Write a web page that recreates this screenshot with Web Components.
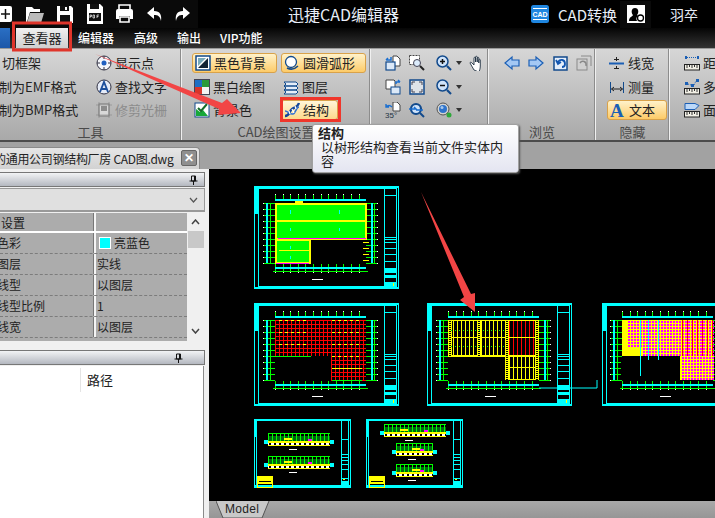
<!DOCTYPE html>
<html lang="zh">
<head>
<meta charset="utf-8">
<title>迅捷CAD编辑器</title>
<style>
html,body{margin:0;height:100%;background:#000;overflow:hidden}
body{font-family:"Noto Sans CJK SC","Liberation Sans",sans-serif;font-size:13px;color:#222}
</style>
</head>
<body>
<cad-app>
  <title-bar slot="title"></title-bar>
  <menu-tabs slot="tabs"></menu-tabs>
  <ribbon-bar slot="ribbon">
    <ribbon-group label="工具" width="182" cols="94px 84px" pad="2">
      <ribbon-btn>切框架</ribbon-btn><ribbon-btn icon="point">显示点</ribbon-btn>
      <ribbon-btn style="margin-left:-3px">制为EMF格式</ribbon-btn><ribbon-btn icon="find">查找文字</ribbon-btn>
      <ribbon-btn style="margin-left:-3px">制为BMP格式</ribbon-btn><ribbon-btn icon="crop" disabled>修剪光栅</ribbon-btn>
    </ribbon-group>
    <ribbon-group label="CAD绘图设置" width="189" cols="89px 86px" pad="12">
      <ribbon-btn icon="blackbg" active>黑色背景</ribbon-btn><ribbon-btn icon="arc" active>圆滑弧形</ribbon-btn>
      <ribbon-btn icon="bw">黑白绘图</ribbon-btn><ribbon-btn icon="layers">图层</ribbon-btn>
      <ribbon-btn icon="bgcolor">背景色</ribbon-btn><ribbon-btn icon="dna" active short>结构</ribbon-btn>
    </ribbon-group>
    <ribbon-group width="118" cols="24px 27px 33px 24px" pad="14">
      <ribbon-btn icon="copyto"></ribbon-btn><ribbon-btn icon="zoomwin"></ribbon-btn><ribbon-btn icon="zoomin" drop></ribbon-btn><ribbon-btn icon="hand"></ribbon-btn>
      <ribbon-btn icon="copyfrom"></ribbon-btn><ribbon-btn icon="fit"></ribbon-btn><ribbon-btn icon="zoomout" drop></ribbon-btn><span></span>
      <ribbon-btn icon="rotate"></ribbon-btn><ribbon-btn icon="refresh"></ribbon-btn><ribbon-btn icon="globe" drop></ribbon-btn><span></span>
    </ribbon-group>
    <ribbon-group label="浏览" width="107" cols="24px 25px 23px 24px" pad="15">
      <ribbon-btn icon="left"></ribbon-btn><ribbon-btn icon="right"></ribbon-btn><ribbon-btn icon="back"></ribbon-btn><ribbon-btn icon="backoff"></ribbon-btn>
    </ribbon-group>
    <ribbon-group label="隐藏" width="74" cols="60px" pad="13">
      <ribbon-btn icon="linew">线宽</ribbon-btn>
      <ribbon-btn icon="measure">测量</ribbon-btn>
      <ribbon-btn icon="textA" active>文本</ribbon-btn>
    </ribbon-group>
    <ribbon-group width="60" cols="60px" pad="14" last>
      <ribbon-btn icon="dist">距离</ribbon-btn>
      <ribbon-btn icon="multi">多段线</ribbon-btn>
      <ribbon-btn icon="area">面积</ribbon-btn>
    </ribbon-group>
  </ribbon-bar>
  <doc-strip slot="docs">的通用公司钢结构厂房 CAD图.dwg</doc-strip>
  <side-panel slot="side"></side-panel>
  <cad-canvas slot="canvas">
    <cad-sheet plan="green" style="left:45px;top:17px"></cad-sheet>
    <cad-sheet plan="red" style="left:45px;top:134px"></cad-sheet>
    <cad-sheet plan="yellow" style="left:218px;top:134px"></cad-sheet>
    <cad-sheet plan="magenta" style="left:393px;top:134px"></cad-sheet>
    <cad-sheet plan="elev2" small style="left:45px;top:250px"></cad-sheet>
    <cad-sheet plan="elev3" small style="left:157px;top:250px"></cad-sheet>
  </cad-canvas>
  <ribbon-tip slot="overlay" heading="结构">以树形结构查看当前文件实体内容</ribbon-tip>
  <red-marks slot="overlay"></red-marks>
</cad-app>

<script>
const ruler = `<rect x=".5" y="9.500" width="15" height="5.500" fill="#f2f0e6" stroke="#222"/><path d="M3 10v3M5.500 10v2M8 10v3M10.500 10v2M13 10v3" stroke="#333"/>`;
const ICONS = {
  point:`<circle cx="8" cy="8" r="7" fill="#f4f6fb" stroke="#334"/><circle cx="8" cy="8" r="2.500" fill="#1f5fc0"/><path d="M8 1v3M8 12v3M1 8h3M12 8h3" stroke="#334"/>`,
  find:`<circle cx="8" cy="8" r="7" fill="#e6ecf8" stroke="#334"/><path d="M4 13 8 3l4 10M5.600 10h4.800" fill="none" stroke="#1c4f9c" stroke-width="1.900"/>`,
  crop:`<rect x="3" y="2" width="10" height="12" fill="#d8d8d8" stroke="#777"/><rect x="5" y="4" width="6" height="5" fill="#8c8c8c"/><path d="M0 3h16M0 13h16M3 0v16M13 0v16" stroke="#888" stroke-width=".6"/>`,
  blackbg:`<rect x="1" y="1" width="14" height="14" fill="#fff" stroke="#124a8c" stroke-width="1.500"/><path d="M3 13 13 3v10z" fill="#123"/><path d="M3 3h8L3 11z" fill="#7ab"/>`,
  arc:`<circle cx="7" cy="7" r="5.500" fill="#fff" stroke="#124a8c" stroke-width="1.300"/><path d="M3 13c4 2 8 1 11-2" fill="none" stroke="#124a8c" stroke-width="1.500"/>`,
  bw:`<rect x="1" y="1" width="7" height="7" fill="#1d6fc4"/><rect x="8" y="1" width="7" height="7" fill="#2a9a3a"/><rect x="1" y="8" width="7" height="7" fill="#d8342a"/><rect x="8" y="8" width="7" height="7" fill="#f4f4f4"/><rect x=".5" y=".5" width="15" height="15" fill="none" stroke="#445"/>`,
  layers:`<path d="M1 3h12l2 2-2 2H1l2-2zM1 7h12l2 2-2 2H1l2-2zM1 11h12l2 2-2 2H1l2-2z" fill="#e6eef8" stroke="#124a8c"/>`,
  bgcolor:`<rect x="1" y="1" width="14" height="14" fill="#fff" stroke="#124a8c"/><path d="M2 14V7l4 3 3-2 5 6z" fill="#18a83a"/><path d="m4 6 3 3 6-7" fill="none" stroke="#176c2a" stroke-width="2"/>`,
  dna:`<path d="M1 14C6 14 5 9 8 7s6-2 7-6" fill="none" stroke="#14479c" stroke-width="2.400"/><path d="M1 9c3 0 5 4 8 3s3-7 6-7" fill="none" stroke="#2f6fd0" stroke-width="1.500"/><path d="m5 9 1 3M8 7l2 4M11 4l1 3" stroke="#fff" stroke-width="1.200"/>`,
  copyto:`<path d="M8 1h4l3 3v7H8z" fill="#fff" stroke="#444"/><rect x="1" y="7" width="9" height="8" fill="#dce9f8" stroke="#124a8c" stroke-width="1.200"/><path d="M1 5h5V2M1 5l2-2" fill="none" stroke="#1b6fd0" stroke-width="1.500"/>`,
  zoomwin:`<rect x=".5" y=".5" width="10" height="9" fill="#fff" stroke="#444" stroke-dasharray="2 1"/><circle cx="8" cy="8" r="3.500" fill="#dcecfc" stroke="#445"/><path d="m11 11 4 4" stroke="#222" stroke-width="2"/>`,
  zoomin:`<circle cx="6.500" cy="6.500" r="5.500" fill="#cfe3fa" stroke="#124a8c" stroke-width="1.500"/><path d="M4 6.500h5M6.500 4v5" stroke="#111" stroke-width="1.500"/><path d="m11 11 4 4" stroke="#124a8c" stroke-width="2.200"/>`,
  zoomout:`<circle cx="6.500" cy="6.500" r="5.500" fill="#cfe3fa" stroke="#124a8c" stroke-width="1.500"/><path d="M4 6.500h5" stroke="#111" stroke-width="1.500"/><path d="m11 11 4 4" stroke="#124a8c" stroke-width="2.200"/>`,
  hand:`<path d="M5 15 1 8c0-1 1-1 2 0l2 2V3c0-1 1.500-1 1.500 0v4-5c0-1 1.700-1 1.700 0v5-4c0-1 1.600-1 1.600 0v5-3c0-1 1.500-1 1.500 0v6c0 3-1 5-1.500 6z" fill="#fff" stroke="#234" stroke-width=".9"/>`,
  copyfrom:`<path d="M1 1h8l1 1v8H1z" fill="#fff" stroke="#444"/><rect x="6" y="8" width="9" height="7" fill="#dce9f8" stroke="#124a8c"/><path d="M11 5V3h4M15 3l-2-2" fill="none" stroke="#1b6fd0" stroke-width="1.500"/>`,
  fit:`<rect x="1" y="1" width="14" height="14" fill="#dfe3e8" stroke="#124a8c" stroke-width="1.500"/><path d="M3 6V3h3M10 3h3v3M13 10v3h-3M6 13H3v-3" fill="none" stroke="#445"/>`,
  rotate:`<path d="M8 0h4l3 3v6H8z" fill="#fff" stroke="#444"/><path d="M1 5c2-2 4-2 6 0M1 2v3h3" fill="none" stroke="#1b6fd0" stroke-width="1.400"/><text x="0" y="16" font-family="Liberation Sans,sans-serif" font-size="8" fill="#234">35°</text>`,
  refresh:`<circle cx="7" cy="7" r="5" fill="#cfe3fa" stroke="#124a8c" stroke-width="2.200"/><path d="M0 7h7l-2-2M7 8h7" stroke="#1b6fd0" stroke-width="1.500" fill="none"/><path d="m11 11 4 4" stroke="#124a8c" stroke-width="2"/>`,
  globe:`<circle cx="7" cy="7" r="6" fill="#d4d4d0" stroke="#555"/><circle cx="7" cy="7" r="4" fill="#2f74cc"/><circle cx="6" cy="5.500" r="1.500" fill="#a8c8ec"/><circle cx="13" cy="13" r="2.500" fill="#2ea83a"/>`,
  left:`<path d="M1 8 8 2v3h7v6H8v3z" fill="#a4c8f4" stroke="#1b5fb5" stroke-width="1.200"/>`,
  right:`<path d="M15 8 8 2v3H1v6h7v3z" fill="#a4c8f4" stroke="#1b5fb5" stroke-width="1.200"/>`,
  back:`<rect x="1" y="2" width="13" height="13" fill="#e4eefb" stroke="#124a8c" stroke-width="1.500"/><path d="M5 7c2-3 7-3 7 2 0 2-1 3-3 3M3 5l2 4 3-2" fill="none" stroke="#1256b0" stroke-width="1.800"/>`,
  backoff:`<rect x="1" y="4" width="10" height="11" fill="#d0d0d0" stroke="#8a8a8a"/><path d="M5 1h10v10" fill="none" stroke="#8a8a8a"/><path d="M4 8c2-3 7-2 6 3" fill="none" stroke="#888" stroke-width="1.500"/>`,
  linew:`<path d="M0 8.500h15" stroke="#1b5fb5" stroke-width="2"/><path d="M5 4.500h5M5 13.500h5M7.500 2v4M7.500 11v3" stroke="#222"/>`,
  measure:`<path d="M1.500 3v11M14.500 3v11" stroke="#124a8c"/><path d="M2.500 10h11M5 8l-2.500 2L5 12M11 8l2.500 2L11 12" fill="none" stroke="#222"/>`,
  textA:`<text x="0" y="15" font-family="Liberation Serif,serif" font-weight="700" font-size="19" fill="#1b5fb5">A</text>`,
  dist:`<path d="M1 2.500h2M13 2.500h2" stroke="#1b5fb5" stroke-width="3"/><path d="M3 2.500h10" stroke="#1b5fb5" stroke-dasharray="1 1"/>${ruler}`,
  multi:`<path d="M1 4.500h3M7 6.500h3M12 1.500h3" stroke="#1b5fb5" stroke-width="3"/><path d="M4 5l3 1M10 6l2-4" stroke="#1b5fb5" stroke-dasharray="1 1"/>${ruler}`,
  area:`<path d="M1 1.500h10l4 2-4 4H1z" fill="#bcd8f8" stroke="#1b5fb5"/>${ruler}`
};

class CadApp extends HTMLElement {
  constructor() {
    super();
    this.attachShadow({ mode: "open" }).innerHTML = `<style>
      :host{display:grid;position:relative;width:715px;height:518px;overflow:hidden;
        grid-template-columns:209px 1fr;grid-template-rows:28px 20px 94px 27px 1fr;background:#000}
      .wide{grid-column:1 / 3;display:block;min-width:0}
    </style>
    <div class="wide"><slot name="title"></slot></div>
    <div class="wide"><slot name="tabs"></slot></div>
    <div class="wide"><slot name="ribbon"></slot></div>
    <div class="wide"><slot name="docs"></slot></div>
    <slot name="side"></slot>
    <slot name="canvas"></slot>
    <slot name="overlay"></slot>`;
  }
}

class TitleBar extends HTMLElement {
  constructor() {
    super();
    this.attachShadow({ mode: "open" }).innerHTML = `<style>
      :host{display:flex;align-items:center;height:28px;background:#000;color:#e8eef8;position:relative}
      svg{display:block;flex:none}
      .tools{display:flex;align-items:center;height:28px;padding-left:0;background:#0a0a0a;width:198px;flex:none}
      .name{font-size:16px;margin-left:90px;width:114px;white-space:nowrap;line-height:28px}
      .conv{font-size:15px;margin-left:129px;display:flex;align-items:center;gap:9px;width:96px;white-space:nowrap}
      .user{display:flex;align-items:center;justify-content:center;width:31px;height:27px;background:#0a0a0a;margin-left:-7px}
      .who{font-size:14px;margin-left:19px}
    </style>
    <div class="tools">
      <svg width="13" height="20" viewBox="0 0 13 20" style="margin-right:12px"><path d="M0 2h10q2 0 2 2v12q0 2-2 2H0z" fill="#fff"/><path d="M1 10h9M5.500 5v10" stroke="#111" stroke-width="1.500"/></svg>
      <svg width="19" height="20" viewBox="0 0 19 20" style="margin-right:12px"><path d="M1 3h6l2 2h6v3H5L2 18H1z" fill="#fff"/><path d="M5 9h14l-3 10H2z" fill="#bbb"/></svg>
      <svg width="18" height="20" viewBox="0 0 18 20" style="margin-right:12px"><path d="M1 2h14l2 2v15H1z" fill="#fff"/><rect x="4" y="2" width="9" height="5" fill="#111"/><rect x="4" y="11" width="10" height="8" fill="#111"/><rect x="9" y="3" width="2" height="3" fill="#fff"/></svg>
      <svg width="18" height="22" viewBox="0 0 18 22" style="margin-right:11px"><path d="M1 1h13l3 3v17H1z" fill="#fff"/><rect x="4" y="1" width="9" height="5" fill="#111"/><rect x="3" y="10" width="12" height="8" fill="#111"/><path d="M4 15v-3h1.500v1.500H4M7 12v3h1.500v-3zM11 15v-3h2M11 13.500h1.500" stroke="#fff" stroke-width=".7" fill="none"/></svg>
      <svg width="19" height="20" viewBox="0 0 19 20" style="margin-right:12px"><path d="M4 1h11v5H4z" fill="none" stroke="#fff" stroke-width="1.600"/><path d="M1 7q0-2 2-2h13q2 0 2 2v8h-3v-3H4v3H1z" fill="#fff"/><path d="M5 13h9v5H5z" fill="none" stroke="#fff" stroke-width="1.600"/></svg>
      <svg width="18" height="20" viewBox="0 0 18 20" style="margin-right:9px"><path d="M8 3 1 9l7 6v-4c4 0 6 1 7 6 1-6-1-10-7-10z" fill="#fff"/></svg>
      <svg width="18" height="20" viewBox="0 0 18 20"><path d="m10 3 7 6-7 6v-4c-4 0-6 1-7 6-1-6 1-10 7-10z" fill="#fff"/></svg>
    </div>
    <div class="name">迅捷CAD编辑器</div>
    <div class="conv">
      <svg width="18" height="18" viewBox="0 0 18 18"><rect width="18" height="18" rx="2.500" fill="#1f86e0"/><path d="M2 3.500h14M2 14.500h14" stroke="#fff"/><text x="9" y="12" text-anchor="middle" font-family="Liberation Sans,sans-serif" font-size="7" font-weight="700" fill="#fff">CAD</text></svg>
      <span>CAD转换</span>
    </div>
    <div class="user">
      <svg width="18" height="18" viewBox="0 0 18 18"><rect width="18" height="18" fill="#fff"/><path d="M2 16c0-4 3-4 4-6-2-2-2-7 2-7s4 5 2 7l1 1c-2 1-2 3-1 5z" fill="#000"/><circle cx="13.500" cy="13" r="3" fill="none" stroke="#000" stroke-width="1.300"/></svg>
    </div>
    <div class="who">羽卒</div>`;
  }
}

class MenuTabs extends HTMLElement {
  constructor() {
    super();
    this.attachShadow({ mode: "open" }).innerHTML = `<style>
      :host{display:flex;align-items:center;height:20px;background:linear-gradient(#050505,#333);color:#fff;font-size:12px;font-weight:500}
      .app{width:10px;height:20px;background:linear-gradient(#2a6fc4,#1c57a8);flex:none}
      .on{margin-left:6px;width:52px;height:20px;line-height:20px;text-align:center;background:linear-gradient(#f1f1f1,#cfcfcf);color:#222;font-size:13px;font-weight:400;flex:none}
      span{position:absolute;line-height:20px;white-space:nowrap}
    </style>
    <div class="app"></div><div class="on">查看器</div>
    <span style="left:78px">编辑器</span><span style="left:134px">高级</span><span style="left:177px">输出</span><span style="left:220px">VIP功能</span>`;
  }
}

class RibbonBar extends HTMLElement {
  constructor() {
    super();
    this.attachShadow({ mode: "open" }).innerHTML = `<style>
      :host{display:flex;height:94px;overflow:hidden;box-sizing:border-box;
        background:linear-gradient(#d6d6d6,#c4c4c4 40%,#a9a9a9);border-top:1px solid #9a9a9a;border-bottom:2px solid #4c4c4c}
    </style><slot></slot>`;
  }
}

class RibbonGroup extends HTMLElement {
  constructor() {
    super();
    const w = this.getAttribute("width");
    const label = this.getAttribute("label") || "";
    const line = this.hasAttribute("last") ? "" : "border-right:1px solid #f0f0f0;box-shadow:inset -1px 0 0 #8c8c8c;";
    this.attachShadow({ mode: "open" }).innerHTML = `<style>
      :host{display:flex;flex-direction:column;flex:none;width:${w}px;box-sizing:border-box;${line}}
      .items{display:grid;grid-template-columns:${this.getAttribute("cols")};grid-template-rows:24px 23px 20px;
        padding:4px 0 0 ${this.getAttribute("pad")}px;height:67px}
      .label{text-align:center;font-size:13px;line-height:20px;margin-top:2px;color:#4a4a4a;white-space:nowrap;height:18px}
    </style>
    <div class="items"><slot></slot></div><div class="label">${label}</div>`;
  }
}

class RibbonBtn extends HTMLElement {
  constructor() {
    super();
    const icon = this.getAttribute("icon");
    const drop = this.hasAttribute("drop") ? `<svg width="6" height="4" viewBox="0 0 6 4" style="margin-left:1px"><path d="M0 0h6L3 4z" fill="#333"/></svg>` : "";
    const svg = icon ? `<svg class="ic" width="16" height="16" viewBox="0 0 16 16">${ICONS[icon]}</svg>` : "";
    this.attachShadow({ mode: "open" }).innerHTML = `<style>
      :host{display:flex;align-items:center;height:20px;padding-bottom:1px;font-size:13px;color:#222;white-space:nowrap;box-sizing:border-box}
      :host([active]){margin-left:-2px;width:85px;padding-left:2px;background:linear-gradient(#fff2ca,#fdcb68);
        border:1px solid #d9a24a;border-radius:3px}
      :host([active][short]){width:57px;background:linear-gradient(#fff6d8,#fdd98c)}
      :host([icon="textA"][active]){width:60px}
      :host([disabled]){color:#8c8c8c}
      .ic{flex:none;margin-right:3px}
    </style>${svg}${drop}<slot></slot>`;
  }
}

class DocStrip extends HTMLElement {
  constructor() {
    super();
    this.attachShadow({ mode: "open" }).innerHTML = `<style>
      :host{display:block;height:27px;background:#a2a2a2;position:relative;overflow:hidden}
      .tab{position:absolute;left:-1px;top:5px;width:201px;height:22px;box-sizing:border-box;background:linear-gradient(#e6e6e6,#d2d2d2);
        border:1px solid #8a8a8a;border-bottom:0;border-radius:0 4px 0 0;display:flex;align-items:center;font-size:12px;letter-spacing:-.3px;color:#222;white-space:nowrap;overflow:hidden}
      .name{margin-left:-6px}
      .x{position:absolute;left:181px;top:2px;width:16px;height:16px;box-sizing:border-box;background:#8f8f8f;border:1px solid #666;border-radius:2px;
        color:#fff;font:700 12px/14px "Liberation Sans",sans-serif;text-align:center}
    </style><div class="tab"><span class="name"><slot></slot></span><div class="x">✕</div></div>`;
  }
}

class PropRow extends HTMLElement {
  constructor() {
    super();
    const swatch = this.hasAttribute("swatch") ? `<i></i>` : "";
    this.attachShadow({ mode: "open" }).innerHTML = `<style>
      :host{display:grid;grid-template-columns:96px 91px;height:21px;font-size:12px;line-height:20px;color:#222;border-bottom:1px dashed #7c7c7c;box-sizing:border-box;white-space:nowrap}
      :host([head]){height:20px;border-bottom:2px solid #fff;font-size:12px}
      .k{text-indent:-3px;overflow:hidden;border-right:2px solid #f4f4f4;box-shadow:inset -1px 0 0 #777}
      :host([head]) .k{text-indent:1px}
      .v{padding-left:1px;display:flex;align-items:center}
      i{width:10px;height:10px;background:#0ff;border:1px solid #fff;margin:0 3px 0 2px}
    </style><div class="k">${this.getAttribute("k")}</div><div class="v">${swatch}<slot></slot></div>`;
  }
}

class SidePanel extends HTMLElement {
  constructor() {
    super();
    const pin = `<svg width="9" height="10" viewBox="0 0 9 10"><path d="M2.500 1h4v5h-4zM0.500 6h8M4.500 6v4M5.500 1v5" fill="none" stroke="#111"/></svg>`;
    this.attachShadow({ mode: "open" }).innerHTML = `<style>
      :host{display:flex;flex-direction:column;width:209px;height:350px;background:#f0f0f0;overflow:hidden;padding-top:3px;box-sizing:border-box}
      .head{height:15px;width:205px;flex:none;box-sizing:border-box;background:linear-gradient(#f2f3f5,#b4b8c0);border:1px solid #777;border-left:0;display:flex;align-items:center;justify-content:flex-end;padding-right:6px;font-size:12px;position:relative}
      .combo{height:24px;width:205px;margin-top:1px;box-sizing:border-box;background:#e0e0e0;border:1px solid #999;border-left:0;border-bottom-width:2px;display:flex;align-items:center;justify-content:flex-end;padding-right:6px;flex:none}
      .grid{display:flex;width:204px;height:128px;margin-top:1px;flex:none;background:#fff}
      .rows{width:187px;background:#acacac;overflow:hidden}
      .bar{width:17px;background:#f0f0f0;display:flex;flex-direction:column;align-items:center;box-sizing:border-box;padding-top:6px}
      .thumb{width:16px;height:17px;background:#c8c8c8;margin-top:6px}
      .bar svg:last-child{margin-top:auto;margin-bottom:7px}
      .second{margin-top:9px;justify-content:flex-end;padding-right:21px}
      .list{flex:1;width:204px;margin-top:1px;background:#fff;border-right:1px solid #8a8a8a;box-sizing:border-box;position:relative;padding:2px 0 0 80px}
      .cols{height:24px;border-left:1px solid #e4e4e4;padding-left:6px;font-size:13px;line-height:24px;color:#222}
    </style>
    <div class="head">${pin}</div>
    <div class="combo"><svg width="9" height="6" viewBox="0 0 9 6"><path d="m1 1 3.500 4L8 1" fill="none" stroke="#555" stroke-width="1.200"/></svg></div>
    <div class="grid">
      <div class="rows"><slot></slot></div>
      <div class="bar">
        <svg width="9" height="6" viewBox="0 0 9 6"><path d="m1 5 3.500-4L8 5" fill="none" stroke="#444" stroke-width="1.500"/></svg>
        <div class="thumb"></div>
        <svg width="9" height="6" viewBox="0 0 9 6"><path d="m1 1 3.500 4L8 1" fill="none" stroke="#444" stroke-width="1.500"/></svg>
      </div>
    </div>
    <div class="head second">${pin}</div>
    <div class="list"><div class="cols">路径</div></div>`;
    this.innerHTML = `<prop-row head k="设置"></prop-row>
      <prop-row k="色彩" swatch>亮蓝色</prop-row>
      <prop-row k="图层">实线</prop-row>
      <prop-row k="线型">以图层</prop-row>
      <prop-row k="线型比例">1</prop-row>
      <prop-row k="线宽">以图层</prop-row>`;
  }
}

class CadCanvas extends HTMLElement {
  constructor() {
    super();
    this.attachShadow({ mode: "open" }).innerHTML = `<style>
      :host{display:flex;flex-direction:column;width:506px;height:349px;overflow:hidden;position:relative}
      .paper{flex:1;background:#000;position:relative}
      .link{position:absolute;left:330px;top:210px}
      .tabs{height:17px;flex:none;background:linear-gradient(#a9a9a9,#969696);position:relative;font:12px/17px "Liberation Sans",sans-serif;letter-spacing:.3px;color:#222}
      .tabs svg{position:absolute;left:7px;top:0}
      .tabs span{position:absolute;left:16px;top:0}
    </style>
    <div class="paper"><slot></slot>
      <svg class="link" width="60" height="10" viewBox="0 0 60 10"><path d="M0 9h58V1" fill="none" stroke="#0ff"/></svg>
    </div>
    <div class="tabs"><svg width="54" height="17" viewBox="0 0 54 17"><path d="M0 0 7 17H46L53 0" fill="#c8c8c8" stroke="#555"/></svg><span>Model</span></div>`;
  }
}

// helpers for the drawing sheets
const C = "#0ff", G = "#0f0", Y = "#ff0", R = "#f00", M = "#f0f", W = "#fff";
const L = (a, b, c, d, col, w = 1) => `<line x1="${a}" y1="${b}" x2="${c}" y2="${d}" stroke="${col}" stroke-width="${w}"/>`;
const B = (x, y, w, h, col) => `<rect x="${x}" y="${y}" width="${w}" height="${h}" fill="${col}"/>`;
const O = (x, y, w, h, col, sw = 1) => `<rect x="${x + .5}" y="${y + .5}" width="${w - 1}" height="${h - 1}" fill="none" stroke="${col}" stroke-width="${sw}"/>`;

function axes(x0, x1, y0, y1) {
  let s = "";
  for (let x = x0; x <= x1; x += 7.6) {
    const px = Math.round(x);
    s += L(px + .5, y0 - 8, px + .5, y0 - 2, G) + L(px + .5, y1 + 1, px + .5, y1 + 8, G);
    s += B(px, y0 - 9, 1, 1, W) + B(px, y1 + 9, 1, 1, W);
  }
  s += L(x0, y0 - 3.5, x1, y0 - 3.5, C, 2) + L(x0, y1 + 4.5, x1, y1 + 4.5, C, 2);
  for (let y = y0; y <= y1; y += 6) {
    const py = Math.round(y) + .5;
    s += L(x0 - 11, py, x0, py, G) + L(x1, py, x1 + 11, py, G);
    s += B(x0 - 12, py - .5, 1, 1, W) + B(x1 + 11, py - .5, 1, 1, W);
  }
  s += L(x0 - 8.5, y0, x0 - 8.5, y1, C, 2) + L(x0 - 4.5, y0, x0 - 4.5, y1, G);
  s += L(x1 + 5.5, y0, x1 + 5.5, y1, C, 2) + L(x1 + 8.5, y0, x1 + 8.5, y1, G);
  s += B(x0 - 2, y1 + 8, x1 - x0 + 4, 1, G);
  return s;
}

function frame(w, h) {
  let s = O(0, 0, w, h, C) + O(4, 2, w - 6, h - 4, C);
  s += B(0, 0, 5, 28, C) + B(0, 0, w, 2, C) + B(0, h - 2, w, 2, C);
  s += L(130.5, 2, 130.5, h - 2, C);
  [9, 51, 53, 56, 62, 68, 75].forEach((y) => { s += L(130, y + .5, w - 2, y + .5, C); });
  s += B(130, 82, 13, 5, C) + B(130, 89, 13, 3, C) + B(130, 96, 13, 4, C);
  s += B(139, 97, 1, 3, Y);
  s += B(58, 93, 11, 1, W);
  return s;
}

const PLANS = {
  green() {
    let s = frame(145, 103) + axes(21, 112, 17, 77);
    s += B(56, 53, 56, 24, "#000");
    for (let y = 56; y < 77; y += 6) s += B(109, y, 6, 1, Y);
    s += B(21, 17, 91, 36, G) + B(21, 53, 34, 24, G);
    s += O(21, 17, 91, 36, Y, 2) + O(21, 53, 35, 24, Y, 2);
    s += B(21, 34, 91, 2, Y) + B(25, 64, 30, 1, Y) + B(41, 15, 8, 2, Y);
    s += B(24, 52, 88, 1, M) + B(22, 77, 33, 1, M);
    s += B(36, 24, 1, 4, C) + B(85, 24, 1, 4, C) + B(36, 42, 1, 3, C) + B(85, 42, 1, 3, C) + B(36, 60, 1, 3, C) + B(36, 70, 1, 3, C);
    return s;
  },
  red() {
    let s = frame(145, 103) + axes(21, 112, 17, 77);
    s += B(21, 54, 57, 23, "#000");
    for (let x = 21; x < 113; x += 4) s += B(x, 17, 1, 36, R);
    for (let x = 77; x < 113; x += 4) s += B(x, 53, 1, 24, R);
    for (let y = 17; y < 53; y += 4) s += B(21, y, 91, 1, R);
    for (let y = 53; y <= 77; y += 4) s += B(77, y, 35, 1, R);
    [17, 29, 41, 53].forEach((y) => {
      for (let x = 25; x < 55; x += 6) s += B(x, y, 3, 1, Y);
      for (let x = 78; x < 106; x += 6) s += B(x, y, 3, 1, Y);
    });
    s += B(21, 53, 36, 1, G) + B(78, 65, 30, 1, Y) + B(78, 77, 30, 1, G);
    return s;
  },
  yellow() {
    let s = frame(145, 103) + axes(21, 112, 17, 77);
    s += B(21, 54, 57, 23, "#000");
    for (let x = 22; x < 78; x += 4) s += B(x, 17, 1, 36, Y);
    for (let x = 82; x < 108; x += 4) s += B(x, 17, 1, 36, R);
    for (let x = 82; x < 108; x += 4) s += B(x, 53, 1, 24, Y);
    s += B(21, 17, 91, 1, Y) + B(21, 52, 91, 2, Y) + B(21, 34, 91, 1, Y) + B(78, 64, 34, 1, Y) + B(78, 76, 34, 1, Y);
    s += B(21, 17, 4, 36, Y) + B(50, 17, 4, 36, Y) + B(78, 17, 4, 60, Y) + B(108, 17, 4, 60, Y);
    for (let y = 18; y < 77; y += 2) {
      if (y < 53) s += B(22, y, 2, 1, "#000") + B(51, y, 2, 1, "#000");
      s += B(79, y, 2, 1, "#000") + B(109, y, 2, 1, "#000");
    }
    for (let x = 24; x < 78; x += 4) s += B(x, 27, 1, 1, G) + B(x, 43, 1, 1, G);
    return s;
  },
  magenta() {
    let s = frame(145, 103) + axes(20, 111, 17, 77);
    s += B(19, 54, 59, 23, "#000");
    s += B(20, 17, 91, 36, Y) + B(78, 53, 34, 24, Y);
    for (let y = 18; y < 77; y += 3) {
      for (let x = 26; x < 112; x += 3) {
        if (y > 52 && x < 79) continue;
        if (y > 44 && x < 41) continue;
        s += B(x, y, 2, 2, M);
      }
    }
    for (let x = 80; x < 111; x += 5) s += B(x, 17, 1, 36, R);
    s += B(38, 17, 1, 56, C) + B(46, 17, 1, 40, C) + B(56, 17, 1, 40, C);
    return s;
  },
  elev2: () => small(97, 69, [[14, 14, 62], [14, 37, 62]]),
  elev3: () => small(97, 69, [[18, 5, 62], [30, 24, 37], [30, 45, 37]])
};

function small(w, h, rows) {
  let s = B(0, 0, w, 2, C) + B(0, h - 3, w, 3, C) + B(0, 0, 1, h, C) + B(w - 1, 0, 1, h, C) + B(0, 0, 3, 18, C) + B(2, 18, 1, h - 20, C);
  s += L(87.5, 2, 87.5, h - 3, C) + L(w - 2.5, 2, w - 2.5, h - 3, C);
  [20, 35, 38, 41, 45, 50].forEach((y) => { s += L(87, y + .5, w - 2, y + .5, C); });
  s += B(87, 59, 8, 1, C) + B(87, 62, 8, 5, C) + B(89, 60, 2, 1, Y);
  s += B(3, 57, 16, 8, Y) + O(3, 57, 16, 12, Y) + B(5, 62, 12, 1, "#000");
  rows.forEach(([x, y, len]) => {
    s += B(x, y + 3, len, 5, "#061");
    for (let i = x; i <= x + len; i += 4) s += B(i, y, 1, 8, G);
    s += B(x, y, len, 1, G) + B(x, y + 8, len, 2, Y) + B(x, y + 12, len, 1, Y) + B(x, y + 10, len, 2, W);
    for (let i = x + 1; i < x + len; i += 5) s += B(i, y + 10, 2, 2, "#000");
    s += B(x + 16, y + 5, 8, 2, Y) + B(x + 40 * len / 62, y + 6, 4, 2, M);
    s += B(x - 4, y + 7, 4, 4, C) + B(x + len, y + 7, 4, 4, C);
    s += B(x + len / 3, y + 16, 8, 1, W);
  });
  return s;
}

class CadSheet extends HTMLElement {
  constructor() {
    super();
    const sm = this.hasAttribute("small");
    const w = sm ? 97 : 145, h = sm ? 69 : 103;
    this.attachShadow({ mode: "open" }).innerHTML = `<style>
      :host{position:absolute;display:block;width:${w}px;height:${h}px}
      svg{display:block}
    </style><svg width="${w}" height="${h}" viewBox="0 0 ${w} ${h}" shape-rendering="crispEdges">${PLANS[this.getAttribute("plan")]()}</svg>`;
  }
}

class RibbonTip extends HTMLElement {
  constructor() {
    super();
    this.attachShadow({ mode: "open" }).innerHTML = `<style>
      :host{position:absolute;left:312px;top:124px;width:207px;height:49px;box-sizing:border-box;padding:0 6px 0 5px;
        background:linear-gradient(#fff,#e4e5f1);border:1px solid #a0a0a0;border-radius:3px;box-shadow:1px 1px 2px #555;font-size:13px;line-height:14px;color:#222}
      b{display:block;font-weight:700;height:15px;line-height:16px}
      div{padding-left:3px}
    </style><b>${this.getAttribute("heading")}</b><div><slot></slot></div>`;
  }
}

class RedMarks extends HTMLElement {
  constructor() {
    super();
    this.attachShadow({ mode: "open" }).innerHTML = `<style>
      :host{position:absolute;left:0;top:0;display:block;width:715px;height:518px;pointer-events:none}
    </style>
    <svg width="715" height="518" viewBox="0 0 715 518">
      <rect x="13.5" y="23" width="57" height="27" fill="none" stroke="#e0352b" stroke-width="3"/>
      <rect x="281.5" y="98.5" width="58" height="22" fill="none" stroke="#f0362b" stroke-width="3"/>
      <path d="M95 54 222 103 227 99 241 113 218 115 219 109z" fill="#f24545"/>
      <path d="M421 192 471 294 475 293 475 312 460 300 464 297z" fill="#f24545"/>
    </svg>`;
  }
}

customElements.define("cad-app", CadApp);
customElements.define("title-bar", TitleBar);
customElements.define("menu-tabs", MenuTabs);
customElements.define("ribbon-bar", RibbonBar);
customElements.define("ribbon-group", RibbonGroup);
customElements.define("ribbon-btn", RibbonBtn);
customElements.define("doc-strip", DocStrip);
customElements.define("prop-row", PropRow);
customElements.define("side-panel", SidePanel);
customElements.define("cad-canvas", CadCanvas);
customElements.define("cad-sheet", CadSheet);
customElements.define("ribbon-tip", RibbonTip);
customElements.define("red-marks", RedMarks);
</script>
</body>
</html>
